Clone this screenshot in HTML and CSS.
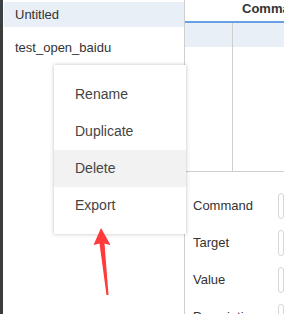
FILE: index.html
```html
<!DOCTYPE html>
<html lang="en">
<head>
    <meta charset="UTF-8">
    <title>Test Suites</title>
    <link rel="stylesheet" href="styles.css">
</head>
<body>
    <div class="rail">
        <div class="rail-top"></div>
    </div>

    <!-- Test case list -->
    <div class="sidebar">
        <div class="case active">Untitled</div>
        <div class="case">test_open_baidu</div>
    </div>

    <!-- Editor -->
    <div class="editor">
        <div class="grid-head">Command</div>
        <div class="grid">
            <div class="grid-row selected">
                <div class="cell first"></div>
                <div class="cell"></div>
            </div>
            <div class="grid-row filler">
                <div class="cell first"></div>
                <div class="cell"></div>
            </div>
        </div>

        <div class="form">
            <div class="form-row">
                <label>Command</label>
                <div class="field"></div>
            </div>
            <div class="form-row">
                <label>Target</label>
                <div class="field"></div>
            </div>
            <div class="form-row">
                <label>Value</label>
                <div class="field"></div>
            </div>
            <div class="form-row">
                <label>Description</label>
                <div class="field"></div>
            </div>
        </div>
    </div>

    <!-- Context menu -->
    <ul class="menu">
        <li>Rename</li>
        <li>Duplicate</li>
        <li class="hover">Delete</li>
        <li>Export</li>
    </ul>

    <svg class="arrow" width="20" height="72" viewBox="90 226 20 72">
        <polygon points="101,228 110.5,245 104.5,243.5 108.5,295 106.5,295 99.5,243.5 93.5,245" fill="#ff3a3a"/>
    </svg>
</body>
</html>
```

FILE: styles.css
```css
body {
    margin: 0;
    height: 314px;
    overflow: hidden;
    display: flex;
    font-family: "Liberation Sans", Arial, sans-serif;
    color: #333;
    background: #fff;
}

.rail {
    width: 3px;
    flex-shrink: 0;
    background: #3c3c3c;
}

.rail-top {
    height: 24px;
    background: #3b4044;
}

.sidebar {
    width: 180px;
    flex-shrink: 0;
    padding: 2px 0 0 1px;
    border-right: 1px solid #cfcfcf;
}

.case {
    height: 25px;
    line-height: 25px;
    padding-left: 11px;
    font-size: 13px;
}

.case + .case {
    margin-top: 8px;
}

.case.active {
    background: #e8eff7;
}

.editor {
    flex: 1;
    display: flex;
    flex-direction: column;
    min-width: 0;
    overflow: hidden;
}

.grid-head {
    flex-shrink: 0;
    height: 21px;
    line-height: 17px;
    padding-left: 57px;
    font-size: 13px;
    font-weight: bold;
    white-space: nowrap;
    border-bottom: 2px solid #6a9fe6;
}

.grid {
    flex-shrink: 0;
    height: 148px;
    display: flex;
    flex-direction: column;
    border-bottom: 1px solid #cfcfcf;
    margin-left: 1px;
}

.grid-row {
    display: flex;
}

.grid-row.selected {
    height: 24px;
    background: #e8eff7;
    margin-left: -1px;
}

.grid-row.filler {
    flex: 1;
}

.cell {
    flex: 1;
}

.cell.first {
    flex: 0 0 46px;
    border-right: 1px solid #cfcfcf;
}

.grid-row.selected .cell.first {
    flex-basis: 47px;
}

.form {
    flex-shrink: 0;
    padding: 15px 0 0 8px;
}

.form-row {
    display: flex;
    align-items: center;
    height: 37px;
}

.form-row label {
    width: 85px;
    flex-shrink: 0;
    font-size: 13px;
    white-space: nowrap;
    overflow: hidden;
}

.field {
    flex: 1;
    height: 24px;
    border: 1px solid #d6d6d6;
    border-radius: 3px;
}

.menu {
    position: absolute;
    left: 54px;
    top: 65px;
    width: 132px;
    margin: 0;
    padding: 11px 0 10px;
    list-style: none;
    background: #fff;
    box-shadow: 0 0 4px rgba(0, 0, 0, 0.25);
}

.menu li {
    height: 37px;
    line-height: 37px;
    padding-left: 21px;
    font-size: 14px;
    color: #444;
}

.menu li.hover {
    background: #f2f2f2;
}

.arrow {
    position: absolute;
    left: 90px;
    top: 226px;
}
```
